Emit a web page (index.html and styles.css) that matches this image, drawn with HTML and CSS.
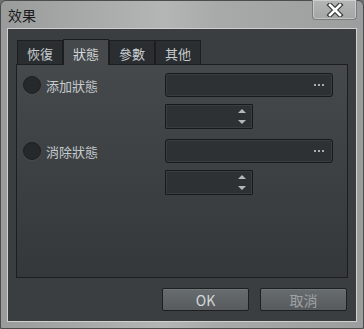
FILE: index.html
```html
<!DOCTYPE html>
<html lang="zh-Hant">
<head>
    <meta charset="UTF-8">
    <meta name="viewport" content="width=device-width, initial-scale=1.0">
    <title>效果</title>
    <link rel="stylesheet" href="styles.css">
</head>
<body>
    <div class="window">
        <div class="titlebar">
            <span class="title">效果</span>
            <button class="close" aria-label="close">
                <svg width="18" height="14" viewBox="0 0 18 14">
                    <path d="M4 2 L14 12 M14 2 L4 12" stroke="#3b3d3f" stroke-width="5" stroke-linecap="square"/>
                    <path d="M4 2 L14 12 M14 2 L4 12" stroke="#ffffff" stroke-width="2.6" stroke-linecap="square"/>
                </svg>
            </button>
        </div>

        <div class="client">
            <div class="tabs">
                <span class="tab">恢復</span>
                <span class="tab active">狀態</span>
                <span class="tab">參數</span>
                <span class="tab">其他</span>
            </div>

            <div class="panel">
                <div class="effect">
                    <label class="option"><span class="radio"></span>添加狀態</label>
                    <div class="inputs">
                        <div class="field"><span class="dots"></span></div>
                        <div class="spin"><span class="up"></span><span class="down"></span></div>
                    </div>
                </div>
                <div class="effect">
                    <label class="option"><span class="radio"></span>消除狀態</label>
                    <div class="inputs">
                        <div class="field"><span class="dots"></span></div>
                        <div class="spin"><span class="up"></span><span class="down"></span></div>
                    </div>
                </div>
            </div>

            <div class="actions">
                <button class="btn">OK</button>
                <button class="btn dim">取消</button>
            </div>
        </div>
    </div>
</body>
</html>
```

FILE: styles.css
```css
* {
    box-sizing: border-box;
}

:root {
    --frame: #a3a5a5;
    --client: #3a3e41;
    --line: #1b1d1f;
    --text: #c6cbce;
    --field: #2e3134;
}

body {
    margin: 0;
    font-family: "Noto Sans CJK TC", "Noto Sans", sans-serif;
    background: #6d6f70;
}

.window {
    width: 364px;
    height: 329px;
    border: 1px solid #4a4c4d;
    border-radius: 6px 6px 2px 2px;
    background: linear-gradient(90deg, #9a9c9c 0%, #b4b6b6 45%, #a8aaaa 60%, #9c9e9e 100%);
    display: flex;
    flex-direction: column;
}

.titlebar {
    height: 27px;
    display: flex;
    align-items: flex-start;
    padding-left: 7px;
}

.title {
    font-size: 14px;
    line-height: 14px;
    margin-top: 7px;
    color: #1a1a1a;
}

.close {
    margin-left: auto;
    margin-right: 6px;
    margin-top: -1px;
    width: 45px;
    height: 20px;
    padding: 0;
    border: 1px solid #7a7c7d;
    border-top: none;
    border-radius: 0 0 4px 4px;
    background: linear-gradient(#b4b6b6, #a4a6a6);
    box-shadow: inset 0 0 0 1px rgba(255, 255, 255, 0.35);
    display: flex;
    align-items: center;
    justify-content: center;
}

.client {
    flex: 1;
    margin: 0 6px 6px;
    border: 1px solid #cfd1d1;
    background: var(--client);
    display: flex;
    flex-direction: column;
    padding: 10px 8px 0;
}

.tabs {
    display: flex;
    align-items: flex-end;
    height: 25px;
    padding-left: 1px;
}

.tab {
    width: 46px;
    height: 24px;
    border: 1px solid var(--line);
    border-bottom: none;
    background: #2b2e31;
    color: var(--text);
    font-size: 13px;
    display: flex;
    align-items: center;
    justify-content: center;
    padding-top: 1px;
}

.tab.active {
    height: 26px;
    margin-bottom: -1px;
    position: relative;
    z-index: 1;
    background: #45494c;
    color: #d6dadc;
}

.panel {
    height: 214px;
    border: 1px solid var(--line);
    background: linear-gradient(#46494c, #34383b);
    padding: 8px 0 0 6px;
}

.effect {
    display: flex;
}

.effect + .effect {
    margin-top: 10px;
}

.option {
    width: 142px;
    height: 24px;
    display: flex;
    align-items: center;
    gap: 5px;
    font-size: 13px;
    color: var(--text);
}

.radio {
    width: 18px;
    height: 18px;
    border-radius: 50%;
    background: #26292b;
    border: 1px solid #1c1e20;
    box-shadow: 0 1px 0 rgba(255, 255, 255, 0.06);
}

.inputs {
    display: flex;
    flex-direction: column;
    gap: 7px;
}

.field,
.spin {
    background: var(--field);
    border: 1px solid #17191a;
    border-radius: 3px;
    box-shadow: inset 0 0 0 1px #3a3d40;
    display: flex;
    align-items: center;
    justify-content: flex-end;
}

.field {
    width: 168px;
    height: 24px;
    padding-right: 8px;
}

.dots {
    width: 2px;
    height: 2px;
    margin-right: 8px;
    background: #a9adb0;
    box-shadow: 4px 0 #a9adb0, 8px 0 #a9adb0;
}

.spin {
    width: 88px;
    height: 25px;
    border-radius: 1px;
    flex-direction: column;
    align-items: flex-end;
    justify-content: center;
    gap: 7px;
    padding-right: 6px;
}

.up,
.down {
    width: 0;
    height: 0;
    border-left: 4px solid transparent;
    border-right: 4px solid transparent;
}

.up {
    border-bottom: 4px solid #b3b7ba;
}

.down {
    border-top: 4px solid #b3b7ba;
}

.actions {
    display: flex;
    justify-content: flex-end;
    gap: 11px;
    margin-top: 10px;
    padding-right: 1px;
}

.btn {
    width: 87px;
    height: 23px;
    border: 1px solid #1d1f21;
    border-radius: 2px;
    background: linear-gradient(#676c6f, #575b5e);
    box-shadow: inset 0 1px 0 rgba(255, 255, 255, 0.08);
    font-family: "Noto Sans CJK TC", "Noto Sans", sans-serif;
    font-size: 14px;
    color: #d3d7d9;
    padding: 0;
}

.btn.dim {
    color: #9ea2a5;
}
```
